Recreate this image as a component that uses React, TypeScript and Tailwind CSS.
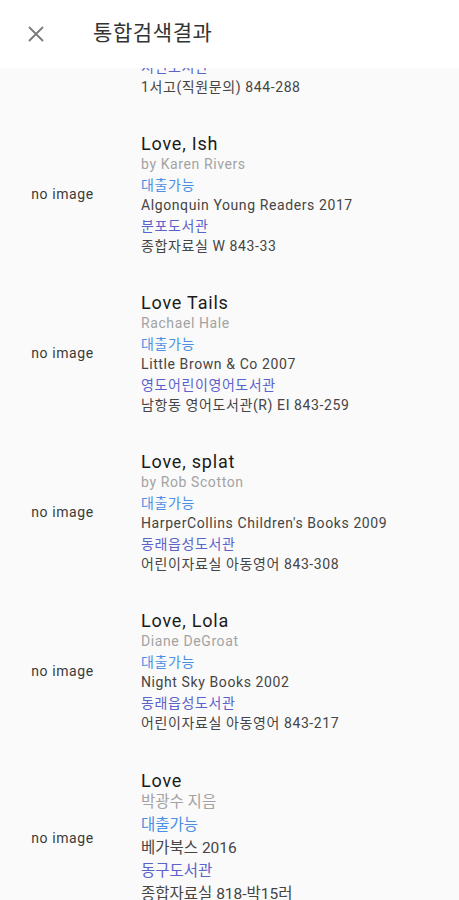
import React from 'react';

interface Book {
  title: string;
  author: string;
  status: string;
  publisher: string;
  library: string;
  location: string;
  large?: boolean;
}

const books: Book[] = [
  {
    title: 'Love',
    author: 'by Unknown',
    status: '대출가능',
    publisher: 'Publisher 2015',
    library: '서면도서관',
    location: '1서고(직원문의) 844-288',
  },
  {
    title: 'Love, Ish',
    author: 'by Karen Rivers',
    status: '대출가능',
    publisher: 'Algonquin Young Readers 2017',
    library: '분포도서관',
    location: '종합자료실 W 843-33',
  },
  {
    title: 'Love Tails',
    author: 'Rachael Hale',
    status: '대출가능',
    publisher: 'Little Brown & Co 2007',
    library: '영도어린이영어도서관',
    location: '남항동 영어도서관(R) EI 843-259',
  },
  {
    title: 'Love, splat',
    author: 'by Rob Scotton',
    status: '대출가능',
    publisher: "HarperCollins Children's Books 2009",
    library: '동래읍성도서관',
    location: '어린이자료실 아동영어 843-308',
  },
  {
    title: 'Love, Lola',
    author: 'Diane DeGroat',
    status: '대출가능',
    publisher: 'Night Sky Books 2002',
    library: '동래읍성도서관',
    location: '어린이자료실 아동영어 843-217',
  },
  {
    title: 'Love',
    author: '박광수 지음',
    status: '대출가능',
    publisher: '베가북스 2016',
    library: '동구도서관',
    location: '종합자료실 818-박15러',
    large: true,
  },
];

function BookRow({ book }: { book: Book }) {
  const row = book.large
    ? 'text-[15.5px] leading-[23px]'
    : 'text-[14px] leading-[20.5px] tracking-[0.6px]';
  return (
    <div className={`flex items-center pb-[16.5px] ${book.large ? 'pt-[20px]' : 'pt-[19px]'}`}>
      <div className="w-[125px] shrink-0 text-center text-[14px] tracking-[0.6px] text-[#3a3a3a]">
        no image
      </div>
      <div className="ml-4 flex flex-col">
        <div className="text-[18px] leading-[21px] tracking-[0.8px] text-[#1a1a1a]">{book.title}</div>
        <div className={`${row} text-[#a3a3a3]`}>{book.author}</div>
        <div className={`${row} text-[#4a8fe3]`}>{book.status}</div>
        <div className={`${row} text-[#454545]`}>{book.publisher}</div>
        <div className={`${row} text-[#5a63c9]`}>{book.library}</div>
        <div className={`${row} text-[#454545]`}>{book.location}</div>
      </div>
    </div>
  );
}

export default function App() {
  return (
    <div
      className="flex h-[900px] w-[459px] flex-col overflow-hidden bg-[#fafafa]"
      style={{ fontFamily: 'Roboto, "Noto Sans CJK KR", sans-serif' }}
    >
      {/* Top bar */}
      <div className="relative z-10 flex h-[68px] shrink-0 items-center bg-white">
        <div className="flex w-[72px] justify-center">
          <svg width="18" height="18" viewBox="0 0 18 18" className="-ml-[0px]">
            <path d="M2 2 L16 16 M16 2 L2 16" stroke="#7a7a7a" strokeWidth="1.8" fill="none" />
          </svg>
        </div>
        <div className="ml-[21px] text-[21px] tracking-[0.6px] text-[#333333]">통합검색결과</div>
      </div>

      {/* Results list, scrolled */}
      <div className="flex-1 overflow-hidden">
        <div className="-mt-[113px] flex flex-col">
          {books.map((b, i) => (
            <BookRow key={i} book={b} />
          ))}
        </div>
      </div>
    </div>
  );
}
